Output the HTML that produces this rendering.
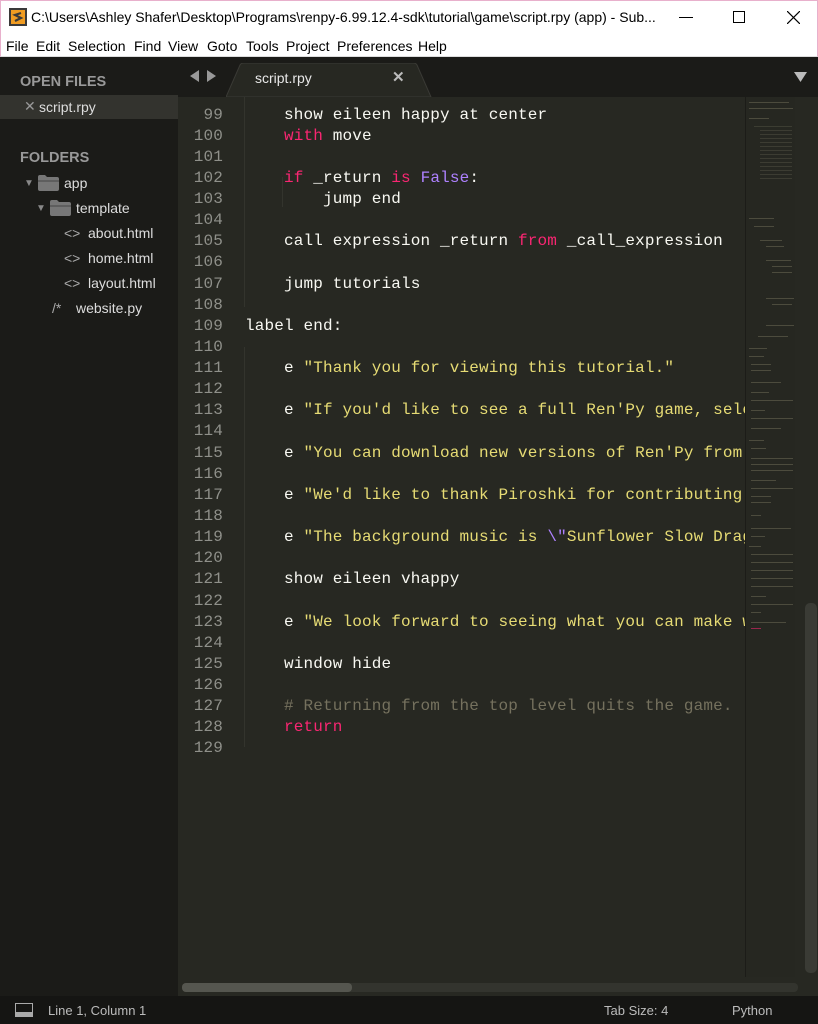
<!DOCTYPE html>
<html><head><meta charset="utf-8">
<style>
*{margin:0;padding:0;box-sizing:border-box}
body{width:818px;height:1024px;overflow:hidden;background:#272822;font-family:"Liberation Sans",sans-serif;position:relative}
.title{position:absolute;left:0;top:0;width:818px;height:34px;background:#fff;border-top:1px solid #e8b0cc;border-left:1px solid #e8b0cc;border-right:1px solid #e8b0cc}
.title .t{position:absolute;left:30px;top:8px;font-size:14px;color:#000;white-space:nowrap}
.menu{position:absolute;left:0;top:34px;width:818px;height:23px;background:#fff;border-left:1px solid #e8b0cc;border-right:1px solid #e8b0cc;border-bottom:1px solid #ddd}
.menu span{position:absolute;top:4px;font-size:14px;color:#000}
.tabbar{position:absolute;left:0;top:57px;width:818px;height:40px;background:#1b1b18}
.side{position:absolute;left:0;top:57px;width:178px;height:939px;background:#1b1b18}
.side div{position:absolute;white-space:nowrap;color:#ddd;font-size:14px}
.hdr{font-weight:bold;color:#999!important;font-size:14.5px!important}
.ln{position:absolute;width:60px;text-align:right;color:#8f908a}
.l{position:absolute;left:245px;color:#f8f8f2}
.k{color:#f92672}.p{color:#ae81ff}.s{color:#e6db74}.c{color:#75715e}
.status{position:absolute;left:0;top:996px;width:818px;height:28px;background:#151513;color:#bbb;font-size:13px}
.status span{position:absolute;top:7px}
</style></head><body>
<div class="title">
<svg style="position:absolute;left:8px;top:7px" width="18" height="18"><rect width="18" height="18" fill="#3a3a3a"/><rect x="2" y="2" width="14" height="14" fill="#f09c22"/><path d="M12 5 L6 7 L12 10 L6 13" stroke="#3a3a3a" stroke-width="2.2" fill="none"/></svg>
<div class="t">C:\Users\Ashley Shafer\Desktop\Programs\renpy-6.99.12.4-sdk\tutorial\game\script.rpy (app) - Sub...</div>
<div style="position:absolute;left:678px;top:16px;width:14px;height:1px;background:#000"></div>
<div style="position:absolute;left:732px;top:10px;width:12px;height:12px;border:1px solid #000"></div>
<svg style="position:absolute;left:786px;top:10px" width="13" height="13"><path d="M0 0L13 13M13 0L0 13" stroke="#000" stroke-width="1.2"/></svg>
</div>
<div class="menu">
<span style="left:5px">File</span><span style="left:35px">Edit</span><span style="left:67px">Selection</span><span style="left:133px">Find</span><span style="left:167px">View</span><span style="left:206px">Goto</span><span style="left:245px">Tools</span><span style="left:285px">Project</span><span style="left:336px">Preferences</span><span style="left:417px">Help</span>
</div>
<div class="tabbar">
<svg style="position:absolute;left:190px;top:13px" width="28" height="12"><path d="M0 6L9 0V12Z M17 0L26 6L17 12Z" fill="#999"/></svg>
<svg style="position:absolute;left:226px;top:6px" width="210" height="34"><path d="M0 34 L14 2 Q15 0 18 0 L187 0 Q190 0 191 2 L205 34Z" fill="#272822" stroke="#3a3a35"/></svg>
<div style="position:absolute;left:255px;top:13px;color:#e8e8e8;font-size:14px">script.rpy</div>
<div style="position:absolute;left:392px;top:11px;color:#bbb;font-size:15px;font-weight:bold">✕</div>
<svg style="position:absolute;left:794px;top:15px" width="13" height="10"><path d="M0 0H13L6.5 10Z" fill="#bbb"/></svg>
</div>
<div class="side">
<div class="hdr" style="left:20px;top:17px">OPEN FILES</div>
<div style="left:0;top:38px;width:178px;height:24px;background:#33332e"></div>
<div style="left:24px;top:41px;color:#999">✕</div>
<div style="left:39px;top:42px">script.rpy</div>
<div class="hdr" style="left:20px;top:93px">FOLDERS</div>
<div style="left:24px;top:121px;color:#888;font-size:10px">▼</div>
<svg style="position:absolute;left:38px;top:118px" width="22" height="16"><path d="M0 2Q0 0 2 0H7L9 2H19Q21 2 21 4V14Q21 16 19 16H2Q0 16 0 14Z" fill="#777"/><path d="M0 6H21" stroke="#444"/></svg>
<div style="left:64px;top:118px">app</div>
<div style="left:36px;top:146px;color:#888;font-size:10px">▼</div>
<svg style="position:absolute;left:50px;top:143px" width="22" height="16"><path d="M0 2Q0 0 2 0H7L9 2H19Q21 2 21 4V14Q21 16 19 16H2Q0 16 0 14Z" fill="#777"/><path d="M0 6H21" stroke="#444"/></svg>
<div style="left:76px;top:143px">template</div>
<div style="left:64px;top:168px;color:#aaa">&lt;&gt;</div><div style="left:88px;top:168px">about.html</div>
<div style="left:64px;top:193px;color:#aaa">&lt;&gt;</div><div style="left:88px;top:193px">home.html</div>
<div style="left:64px;top:218px;color:#aaa">&lt;&gt;</div><div style="left:88px;top:218px">layout.html</div>
<div style="left:52px;top:243px;color:#aaa">/*</div><div style="left:76px;top:243px">website.py</div>
</div>
<div style="position:absolute;left:178px;top:97px;width:640px;height:899px;overflow:hidden">
<div style="position:absolute;left:66px;top:0;width:1px;height:210px;background:#33342d"></div>
<div style="position:absolute;left:66px;top:250px;width:1px;height:400px;background:#33342d"></div>
<div style="position:absolute;left:104px;top:80px;width:1px;height:30px;background:#33342d"></div>
</div>
<div style="position:absolute;left:0;top:0;width:745px;height:996px;overflow:hidden;font-family:'Liberation Mono',monospace;font-size:16px;letter-spacing:0.15px;white-space:pre;clip-path:inset(97px 0 0 0)">
<div style="position:absolute;left:0;top:2px;width:745px;height:900px">
<div class="ln" style="left:163px;top:82px">98</div>
<div class="ln" style="left:163px;top:104px">99</div><div class="l" style="top:104px">    show eileen happy at center</div>
<div class="ln" style="left:163px;top:125px">100</div><div class="l" style="top:125px">    <span class="k">with</span> move</div>
<div class="ln" style="left:163px;top:146px">101</div>
<div class="ln" style="left:163px;top:167px">102</div><div class="l" style="top:167px">    <span class="k">if</span> _return <span class="k">is</span> <span class="p">False</span>:</div>
<div class="ln" style="left:163px;top:188px">103</div><div class="l" style="top:188px">        jump end</div>
<div class="ln" style="left:163px;top:209px">104</div>
<div class="ln" style="left:163px;top:230px">105</div><div class="l" style="top:230px">    call expression _return <span class="k">from</span> _call_expression</div>
<div class="ln" style="left:163px;top:251px">106</div>
<div class="ln" style="left:163px;top:273px">107</div><div class="l" style="top:273px">    jump tutorials</div>
<div class="ln" style="left:163px;top:294px">108</div>
<div class="ln" style="left:163px;top:315px">109</div><div class="l" style="top:315px">label end:</div>
<div class="ln" style="left:163px;top:336px">110</div>
<div class="ln" style="left:163px;top:357px">111</div><div class="l" style="top:357px">    e <span class="s">"Thank you for viewing this tutorial."</span></div>
<div class="ln" style="left:163px;top:378px">112</div>
<div class="ln" style="left:163px;top:399px">113</div><div class="l" style="top:399px">    e <span class="s">"If you'd like to see a full Ren'Py game, select</span></div>
<div class="ln" style="left:163px;top:420px">114</div>
<div class="ln" style="left:163px;top:442px">115</div><div class="l" style="top:442px">    e <span class="s">"You can download new versions of Ren'Py from</span></div>
<div class="ln" style="left:163px;top:463px">116</div>
<div class="ln" style="left:163px;top:484px">117</div><div class="l" style="top:484px">    e <span class="s">"We'd like to thank Piroshki for contributing</span></div>
<div class="ln" style="left:163px;top:505px">118</div>
<div class="ln" style="left:163px;top:526px">119</div><div class="l" style="top:526px">    e <span class="s">"The background music is </span><span class="p">\"</span><span class="s">Sunflower Slow Drag</span></div>
<div class="ln" style="left:163px;top:547px">120</div>
<div class="ln" style="left:163px;top:568px">121</div><div class="l" style="top:568px">    show eileen vhappy</div>
<div class="ln" style="left:163px;top:590px">122</div>
<div class="ln" style="left:163px;top:611px">123</div><div class="l" style="top:611px">    e <span class="s">"We look forward to seeing what you can make wi</span></div>
<div class="ln" style="left:163px;top:632px">124</div>
<div class="ln" style="left:163px;top:653px">125</div><div class="l" style="top:653px">    window hide</div>
<div class="ln" style="left:163px;top:674px">126</div>
<div class="ln" style="left:163px;top:695px">127</div><div class="l" style="top:695px">    <span class="c"># Returning from the top level quits the game.</span></div>
<div class="ln" style="left:163px;top:716px">128</div><div class="l" style="top:716px">    <span class="k">return</span></div>
<div class="ln" style="left:163px;top:737px">129</div>
</div></div>
<div style="position:absolute;left:745px;top:97px;width:50px;height:880px;background:#262721;border-left:1px solid #1c1c18"></div>
<svg style="position:absolute;left:746px;top:100px" width="48" height="640">
<g fill="#6b6a55" opacity="0.55">
<rect x="3" y="2" width="40" height="1"/><rect x="3" y="8" width="44" height="1"/><rect x="3" y="18" width="20" height="1"/>
<g opacity="0.6"><rect x="8" y="26" width="38" height="1"/><rect x="14" y="30" width="32" height="1"/><rect x="14" y="34" width="32" height="1"/><rect x="14" y="38" width="32" height="1"/><rect x="14" y="42" width="32" height="1"/><rect x="14" y="46" width="32" height="1"/><rect x="14" y="50" width="32" height="1"/><rect x="14" y="54" width="32" height="1"/><rect x="14" y="58" width="32" height="1"/><rect x="14" y="62" width="32" height="1"/><rect x="14" y="66" width="32" height="1"/><rect x="14" y="70" width="32" height="1"/><rect x="14" y="74" width="32" height="1"/><rect x="14" y="78" width="32" height="1"/></g>
<rect x="3" y="118" width="25" height="1"/><rect x="8" y="126" width="20" height="1"/><rect x="14" y="140" width="22" height="1"/><rect x="20" y="146" width="18" height="1"/><rect x="20" y="160" width="25" height="1"/><rect x="26" y="166" width="20" height="1"/><rect x="26" y="172" width="20" height="1"/><rect x="20" y="198" width="30" height="1"/><rect x="26" y="204" width="20" height="1"/><rect x="20" y="225" width="30" height="1"/><rect x="12" y="236" width="30" height="1"/>
<rect x="3" y="248" width="18" height="1"/><rect x="3" y="256" width="15" height="1"/>
<rect x="5" y="264" width="20" height="1"/><rect x="5" y="270" width="20" height="1"/><rect x="5" y="282" width="30" height="1"/><rect x="5" y="292" width="18" height="1"/>
<rect x="5" y="300" width="42" height="1"/><rect x="5" y="310" width="14" height="1"/><rect x="5" y="318" width="42" height="1"/>
<rect x="5" y="328" width="30" height="1"/><rect x="3" y="340" width="15" height="1"/><rect x="5" y="348" width="15" height="1"/>
<rect x="5" y="358" width="42" height="1"/><rect x="5" y="364" width="42" height="1"/><rect x="5" y="370" width="42" height="1"/><rect x="5" y="380" width="25" height="1"/><rect x="5" y="388" width="42" height="1"/>
<rect x="5" y="396" width="20" height="1"/><rect x="5" y="402" width="20" height="1"/><rect x="5" y="415" width="10" height="1"/><rect x="5" y="428" width="40" height="1"/>
<rect x="5" y="436" width="14" height="1"/><rect x="3" y="446" width="12" height="1"/>
<rect x="5" y="454" width="42" height="1"/><rect x="5" y="462" width="42" height="1"/><rect x="5" y="470" width="42" height="1"/><rect x="5" y="478" width="42" height="1"/><rect x="5" y="486" width="42" height="1"/>
<rect x="5" y="496" width="15" height="1"/><rect x="5" y="504" width="42" height="1"/><rect x="5" y="512" width="10" height="1"/><rect x="5" y="522" width="35" height="1"/><rect x="5" y="528" width="10" height="1" fill="#f92672"/>
</g></svg>
<div style="position:absolute;left:795px;top:97px;width:23px;height:880px;background:#272822"></div>
<div style="position:absolute;left:805px;top:603px;width:12px;height:370px;background:#3a3b35;border-radius:5px"></div>
<div style="position:absolute;left:182px;top:983px;width:616px;height:9px;background:#33342e;border-radius:4px"></div>
<div style="position:absolute;left:182px;top:983px;width:170px;height:9px;background:#55564f;border-radius:4px"></div>
<div class="status">
<svg style="position:absolute;left:15px;top:7px" width="18" height="14"><rect x="0.5" y="0.5" width="17" height="13" fill="none" stroke="#aaa"/><rect x="1" y="9" width="16" height="4" fill="#aaa"/></svg>
<span style="left:48px">Line 1, Column 1</span>
<span style="left:604px">Tab Size: 4</span>
<span style="left:732px">Python</span>
</div>
</body></html>
